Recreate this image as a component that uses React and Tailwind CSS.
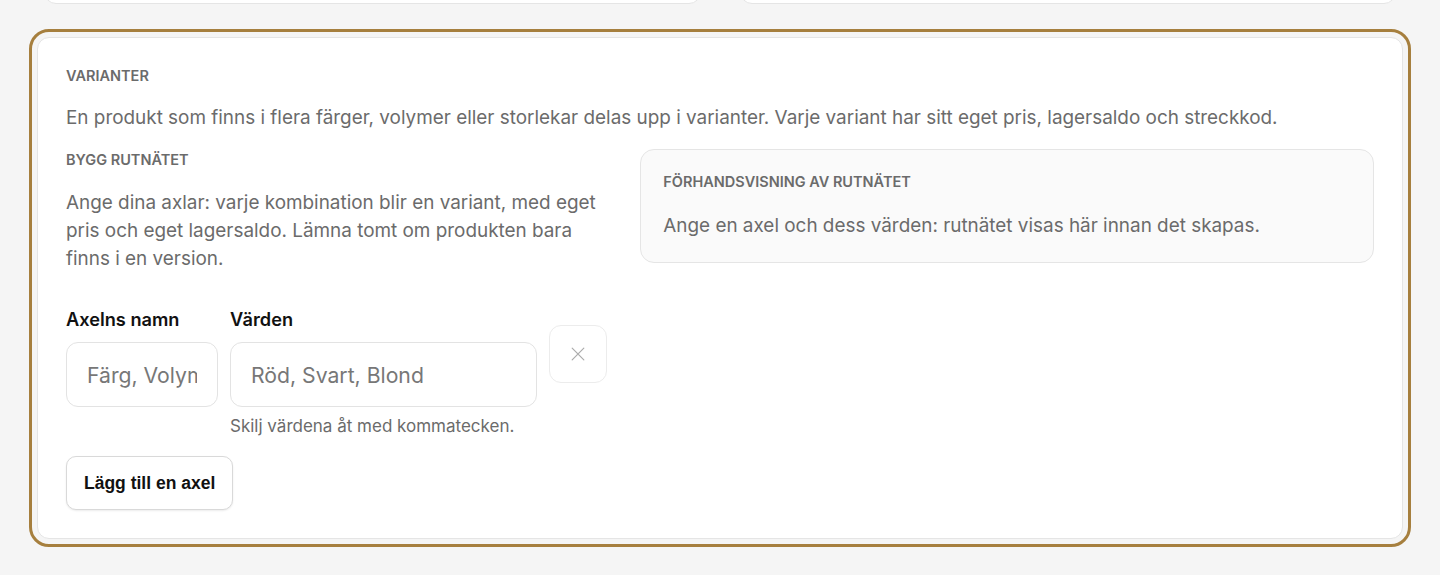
import React from 'react'

function Field({ label, placeholder, width, hint }) {
  return (
    <div className="flex flex-col" style={{ width }}>
      <label className="text-[18.2px] leading-6 font-semibold text-[#111111] mb-[11px]">{label}</label>
      <input
        type="text"
        placeholder={placeholder}
        className="h-[65px] w-full rounded-xl border border-[#e3e3e3] bg-white px-5 text-[21.2px] text-[#222] placeholder:text-[#777777] outline-none"
      />
      {hint && <p className="mt-2 text-[17px] leading-[22px] text-[#6b6b6b]">{hint}</p>}
    </div>
  )
}

export default function App() {
  return (
    <div className="min-h-screen overflow-hidden bg-[#f5f5f5] font-['Inter',sans-serif]">
      {/* cards above, only their bottom edge shows */}
      <div className="grid grid-cols-2 gap-[39px] px-[44px] -mt-[40px]">
        <div className="h-[44px] rounded-xl border border-[#e5e5e5] bg-white" />
        <div className="h-[44px] rounded-xl border border-[#e5e5e5] bg-white" />
      </div>

      <div className="px-[37px] pt-[33px] pb-10">
        <section className="rounded-xl border border-[#e5e5e5] bg-white p-7 outline-[3px] outline-solid outline-[#a67f3e] outline-offset-[5px]">
          <h2 className="text-[14.5px] leading-5 font-semibold uppercase text-[#6b6b6b]">Varianter</h2>
          <p className="mt-[18px] text-[18.9px] leading-7 text-[#6b6b6b]">
            En produkt som finns i flera färger, volymer eller storlekar delas upp i varianter. Varje variant har sitt eget pris, lagersaldo och streckkod.
          </p>

          <div className="mt-[17px] grid grid-cols-[3fr_4fr] gap-6 items-start">
            {/* Builder */}
            <div className="pt-px">
              <h3 className="text-[14.5px] leading-5 font-semibold uppercase text-[#6b6b6b]">Bygg rutnätet</h3>
              <p className="mt-[19px] text-[18.9px] leading-7 text-[#6b6b6b]">
                Ange dina axlar: varje kombination blir en variant, med eget pris och eget lagersaldo. Lämna tomt om produkten bara finns i en version.
              </p>

              <div className="mt-[34px] flex items-start gap-3">
                <Field label="Axelns namn" placeholder="Färg, Volym" width={152} />
                <Field label="Värden" placeholder="Röd, Svart, Blond" width={307} hint="Skilj värdena åt med kommatecken." />
                <button
                  type="button"
                  aria-label="Ta bort axel"
                  className="mt-[18px] flex h-[58px] w-[58px] flex-shrink-0 items-center justify-center rounded-xl border border-[#ececec] bg-white text-[#ababab]"
                >
                  <svg width="20" height="20" viewBox="0 0 24 24" fill="none" stroke="currentColor" strokeWidth="1.4" strokeLinecap="round">
                    <path d="M5 5l14 14M19 5L5 19" />
                  </svg>
                </button>
              </div>

              <button
                type="button"
                className="mt-[19px] h-[54px] rounded-[10px] border border-[#d9d9d9] bg-white px-[17px] font-['Liberation_Sans',Arial,sans-serif] text-[17.5px] font-bold text-[#111111] shadow-[0_1px_2px_rgba(0,0,0,0.08)]"
              >
                Lägg till en axel
              </button>
            </div>

            {/* Preview */}
            <div className="rounded-[14px] border border-[#e5e5e5] bg-[#fafafa] p-[22px]">
              <h3 className="text-[14.5px] leading-5 font-semibold uppercase text-[#6b6b6b]">Förhandsvisning av rutnätet</h3>
              <p className="mt-5 text-[18.9px] leading-7 text-[#6b6b6b]">
                Ange en axel och dess värden: rutnätet visas här innan det skapas.
              </p>
            </div>
          </div>
        </section>
      </div>
    </div>
  )
}
